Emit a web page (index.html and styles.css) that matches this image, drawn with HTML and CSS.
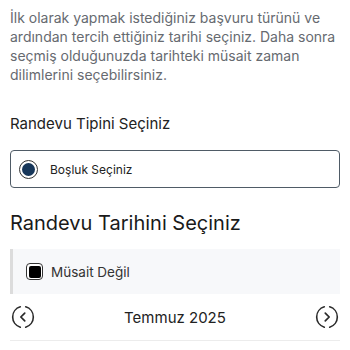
FILE: index.html
```html
<!DOCTYPE html>
<html lang="tr">
<head>
<meta charset="utf-8">
<link rel="stylesheet" href="styles.css">
</head>
<body>
<main class="page">
  <p class="intro">İlk olarak yapmak istediğiniz başvuru türünü ve ardından tercih ettiğiniz tarihi seçiniz. Daha sonra seçmiş olduğunuzda tarihteki müsait zaman dilimlerini seçebilirsiniz.</p>
  <h2 class="section-title">Randevu Tipini Seçiniz</h2>
  <label class="option">
    <span class="radio"><span class="radio-dot"></span></span>
    <span class="option-label">Boşluk Seçiniz</span>
  </label>
  <h1 class="big-title">Randevu Tarihini Seçiniz</h1>
  <div class="legend">
    <span class="check"><span class="check-fill"></span></span>
    <span class="legend-label">Müsait Değil</span>
  </div>
  <div class="month-nav">
    <svg class="nav-btn" viewBox="0 0 24 24" width="26" height="26" aria-hidden="true">
      <path d="M9.5 2.6 A9.8 9.8 0 0 0 9.5 21.4" fill="none" stroke="#2b2b2b" stroke-width="1.5" stroke-linecap="round"/>
      <path d="M14.5 2.6 A9.8 9.8 0 0 1 14.5 21.4" fill="none" stroke="#2b2b2b" stroke-width="1.5" stroke-linecap="round"/>
      <path d="M13.6 8.4 L10 12 L13.6 15.6" fill="none" stroke="#2b2b2b" stroke-width="1.6" stroke-linecap="round" stroke-linejoin="round"/>
    </svg>
    <span class="month">Temmuz 2025</span>
    <svg class="nav-btn" viewBox="0 0 24 24" width="26" height="26" aria-hidden="true">
      <path d="M9.5 2.6 A9.8 9.8 0 0 0 9.5 21.4" fill="none" stroke="#2b2b2b" stroke-width="1.5" stroke-linecap="round"/>
      <path d="M14.5 2.6 A9.8 9.8 0 0 1 14.5 21.4" fill="none" stroke="#2b2b2b" stroke-width="1.5" stroke-linecap="round"/>
      <path d="M10.4 8.4 L14 12 L10.4 15.6" fill="none" stroke="#2b2b2b" stroke-width="1.6" stroke-linecap="round" stroke-linejoin="round"/>
    </svg>
  </div>
</main>
</body>
</html>
```
FILE: styles.css
```css
* { box-sizing: border-box; }
html, body { margin: 0; padding: 0; background: #ffffff; }
body { font-family: Inter, "Noto Sans", sans-serif; color: #222; }
.page { padding: 8px 10px 0 10px; width: 350px; }
.intro {
  margin: 0;
  font-size: 14px;
  line-height: 19px;
  color: #666a70;
}
.section-title {
  margin: 28px 0 0 0;
  font-size: 15px;
  line-height: 24px;
  font-weight: 400;
  color: #222;
}
.option {
  margin-top: 14px;
  height: 38px;
  border: 1px solid #4f5b66;
  border-radius: 4px;
  display: flex;
  align-items: center;
  padding-left: 8px;
  gap: 12px;
}
.radio {
  width: 19px; height: 19px;
  border: 1.5px solid #333;
  border-radius: 50%;
  display: flex; align-items: center; justify-content: center;
}
.radio-dot { width: 13px; height: 13px; border-radius: 50%; background: #17375a; }
.option-label { font-size: 12px; color: #222; }
.big-title {
  margin: 21px 0 0 0;
  font-size: 20px;
  line-height: 28px;
  font-weight: 400;
  color: #1a1a1a;
}
.legend {
  margin-top: 12px;
  height: 45px;
  background: #f7f8fa;
  border-left: 3px solid #dcdcdc;
  display: flex;
  align-items: center;
  padding-left: 13px;
  gap: 8px;
}
.check {
  width: 17px; height: 17px;
  border: 1.5px solid #333;
  border-radius: 4px;
  display: flex; align-items: center; justify-content: center;
  background: #fff;
}
.check-fill { width: 12px; height: 12px; border-radius: 2px; background: #000; }
.legend-label { font-size: 13.5px; color: #333; }
.month-nav {
  height: 47px;
  display: flex;
  align-items: center;
  justify-content: space-between;
  border-bottom: 1px solid #ececec;
}
.nav-btn { display: block; }
.month { font-size: 15px; color: #222; }
```
